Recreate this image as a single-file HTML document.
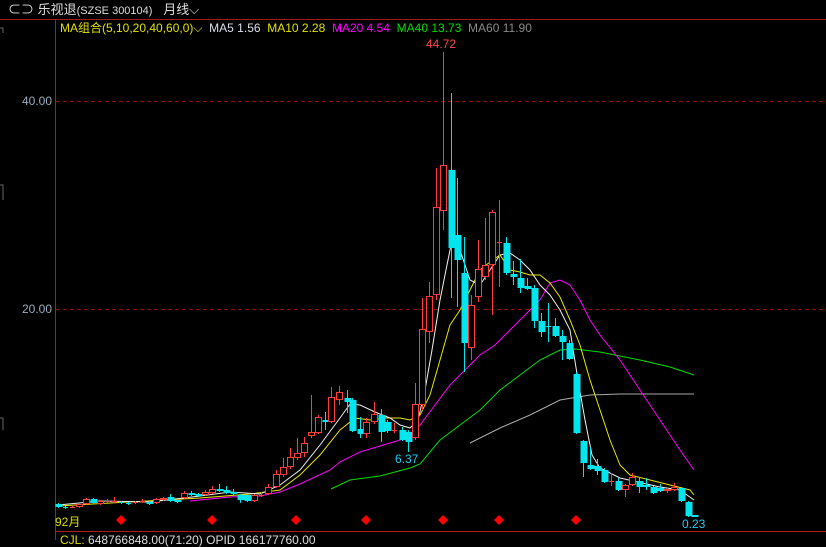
<!DOCTYPE html>
<html><head><meta charset="utf-8"><style>
body{margin:0;background:#000;width:826px;height:540px;overflow:hidden;font-family:"Liberation Sans","Noto Sans CJK SC",sans-serif;}
svg{position:absolute;left:0;top:0}
.t{position:absolute;white-space:nowrap;font-size:12px;line-height:14px}
</style></head><body>
<svg id="s" width="826" height="540" xmlns="http://www.w3.org/2000/svg">
<line x1="0" y1="19.5" x2="826" y2="19.5" stroke="#a01818"/>
<line x1="55.5" y1="19" x2="55.5" y2="540" stroke="#b01c1c"/>
<line x1="55" y1="531.5" x2="826" y2="531.5" stroke="#b01c1c"/>
<line x1="56" y1="101.5" x2="826" y2="101.5" stroke="#8a1010" stroke-dasharray="4,3"/>
<line x1="56" y1="309.5" x2="826" y2="309.5" stroke="#8a1010" stroke-dasharray="4,3"/>
<path d="M0 28H3V33M0 185H3V200M0 418H3V430" stroke="#666" fill="none"/>
<g id="ma" fill="none" stroke-width="1"></g>
<g id="c"></g>
</svg>
<div class="t" style="left:8px;top:3px;color:#ddd;font-size:13px">⊂⊃ 乐视退<span style="font-size:11px">(SZSE 300104)</span>&nbsp;&nbsp; 月线⌵</div>
<div class="t" style="left:60px;top:21px;color:#e0e000">MA组合(5,10,20,40,60,0)⌵ <span style="color:#dde">&nbsp;MA5 1.56</span> <span style="color:#e0e000">&nbsp;MA10 2.28</span> <span style="color:#f0f">&nbsp;MA20 4.54</span> <span style="color:#0d0">&nbsp;MA40 13.73</span> <span style="color:#888">&nbsp;MA60 11.90</span></div>
<div class="t" style="left:22px;top:94px;color:#9ab">40.00</div>
<div class="t" style="left:22px;top:302px;color:#9ab">20.00</div>
<div class="t" style="left:426px;top:37px;color:#f44">44.72</div>
<div class="t" style="left:395px;top:452px;color:#2ce">6.37</div>
<div class="t" style="left:682px;top:517px;color:#2ce">0.23</div>
<div class="t" style="left:55px;top:515px;color:#dd0">92月</div>
<div class="t" style="left:60px;top:533px;color:#ddd"><span style="color:#dd0">CJL:</span> 648766848.00(71:20) OPID 166177760.00</div>
<script>
var C=[
[58,504,507,503,508,0],[65,507,508,506,509,0],[72,507,507,506,508,1],[79,504,507,503,508,1],[86,499,504,498,505,1],[93,499,503,498,504,0],[100,501,504,500,505,1],[107,501,501,499,503,1],[114,501,501,497,503,1],[121,502,503,501,504,0],[128,503,504,502,505,0],[135,502,503,501,504,1],[142,501,501,499,503,1],[149,502,504,501,505,0],[156,499,503,498,504,1],[163,498,500,497,501,1],[170,497,501,494,502,0],[177,500,502,499,503,0],[184,493,498,491,499,1],[191,493,495,491,496,0],[198,494,496,493,497,0],[205,492,495,490,496,1],[212,489,493,486,494,1],[219,489,491,484,492,0],[226,490,493,486,494,0],[233,492,494,489,495,0],[240,495,500,494,503,0],[247,495,501,494,502,0],[254,495,501,494,502,1],[261,495,495,492,497,1],[268,487,494,484,495,1],[276,474,487,470,488,1],[283,467,475,458,477,1],[290,457,467,448,469,1],[297,453,458,438,460,1],[304,443,453,437,457,1],[311,432,436,395,438,1],[318,417,433,415,434,1],[325,420,422,412,430,0],[331,397,422,387,423,1],[339,392,400,386,405,1],[347,398,402,390,413,0],[352,400,431,398,432,0],[360,429,434,417,438,0],[366,422,434,418,438,1],[374,414,422,402,424,1],[381,415,432,409,442,0],[387,422,431,420,433,0],[394,430,430,423,433,1],[402,430,440,427,441,0],[408,432,442,430,452,0],[415,404,438,383,440,1],[422,329,405,298,410,1],[429,296,332,282,343,1],[436,207,295,168,300,1],[443,165,211,52,230,1],[451,170,248,93,298,0],[457,235,260,178,307,0],[464,273,343,237,372,0],[471,305,348,295,360,1],[478,269,297,240,302,1],[485,265,277,218,280,1],[492,212,265,210,315,1],[499,242,242,200,287,1],[506,243,273,237,275,0],[513,274,277,261,285,0],[520,278,288,259,293,0],[527,286,289,278,290,0],[534,288,321,285,328,0],[541,321,332,313,337,0],[548,326,327,303,342,0],[555,326,336,318,337,0],[562,336,342,330,360,0],[569,343,359,340,360,0],[576,374,433,372,434,0],[583,441,463,440,477,0],[590,465,469,447,470,0],[597,466,471,459,475,0],[604,470,482,468,483,0],[611,481,481,473,486,1],[618,481,490,478,491,0],[625,485,490,484,497,1],[632,477,485,473,486,1],[639,481,487,477,493,0],[646,485,487,478,490,0],[653,487,493,486,494,0],[660,488,491,484,492,0],[667,489,491,488,493,1],[674,487,490,483,491,1],[681,488,501,487,502,0],[688,502,516,501,517,0],[694,515,517,515,517,0]];
var h='';
C.forEach(function(a){var x=a[0],t=Math.min(a[1],a[2]),b=Math.max(a[1],a[2]);var col=a[5]?'#ff3b3b':'#00e5ee';
h+='<line x1="'+(x+.5)+'" y1="'+a[3]+'" x2="'+(x+.5)+'" y2="'+a[4]+'" stroke="'+col+'"/>';
if(b-t<1.5){h+='<line x1="'+(x-2)+'" y1="'+(t+.5)+'" x2="'+(x+3)+'" y2="'+(t+.5)+'" stroke="'+col+'"/>';}
else if(a[5]){h+='<rect x="'+(x-2.5)+'" y="'+(t+.5)+'" width="6" height="'+(b-t-1)+'" fill="#000" stroke="'+col+'"/>';}
else{h+='<rect x="'+(x-2.5)+'" y="'+t+'" width="7" height="'+(b-t)+'" fill="'+col+'"/>';}});
[121,212,296,366,443,499,576].forEach(function(x){h+='<path d="M'+x+' 515L'+(x+5)+' 520L'+x+' 525L'+(x-5)+' 520Z" fill="#f00"/>';});
document.getElementById('c').innerHTML=h;
var L=[
['#aaa',[[470,443],[500,428],[530,415],[560,400],[590,395],[620,394],[694,394]]],
['#00dd00',[[331,489],[350,480],[380,476],[410,468],[420,464],[440,440],[460,425],[480,410],[500,390],[520,375],[540,360],[560,350],[575,349],[600,352],[640,360],[670,367],[694,375]]],
['#ff00ff',[[190,501],[230,497],[260,496],[280,492],[300,484],[330,470],[340,462],[360,452],[380,446],[400,440],[410,436],[420,425],[435,405],[450,385],[470,365],[480,355],[495,345],[510,330],[525,315],[540,300],[550,283],[560,280],[570,285],[580,300],[590,320],[600,335],[620,360],[640,390],[660,420],[680,450],[694,470]]],
['#e8e800',[[58,506],[200,498],[250,494],[280,490],[300,475],[320,455],[340,430],[355,418],[370,420],[385,418],[400,418],[410,420],[420,415],[430,395],[440,360],[450,325],[460,310],[470,290],[480,270],[490,262],[500,255],[510,270],[520,272],[530,275],[540,275],[550,283],[560,297],[570,320],[580,345],[590,380],[600,410],[610,440],[620,465],[630,475],[650,480],[670,485],[690,490],[694,495]]],
['#f0f0f0',[[58,505],[100,501],[150,502],[200,496],[230,492],[260,494],[280,485],[300,470],[320,445],[340,418],[350,404],[360,405],[375,412],[390,418],[400,425],[410,428],[418,420],[425,390],[432,350],[440,300],[452,240],[460,250],[470,280],[480,285],[490,270],[500,255],[510,253],[520,260],[530,270],[540,285],[550,295],[560,310],[570,330],[578,380],[585,420],[592,455],[600,468],[620,478],[660,487],[680,490],[694,500]]]];
var m='';L.forEach(function(l){m+='<polyline stroke="'+l[0]+'" points="'+l[1].map(function(p){return p.join(',')}).join(' ')+'"/>';});
document.getElementById('ma').innerHTML=m;
</script>
</body></html>
